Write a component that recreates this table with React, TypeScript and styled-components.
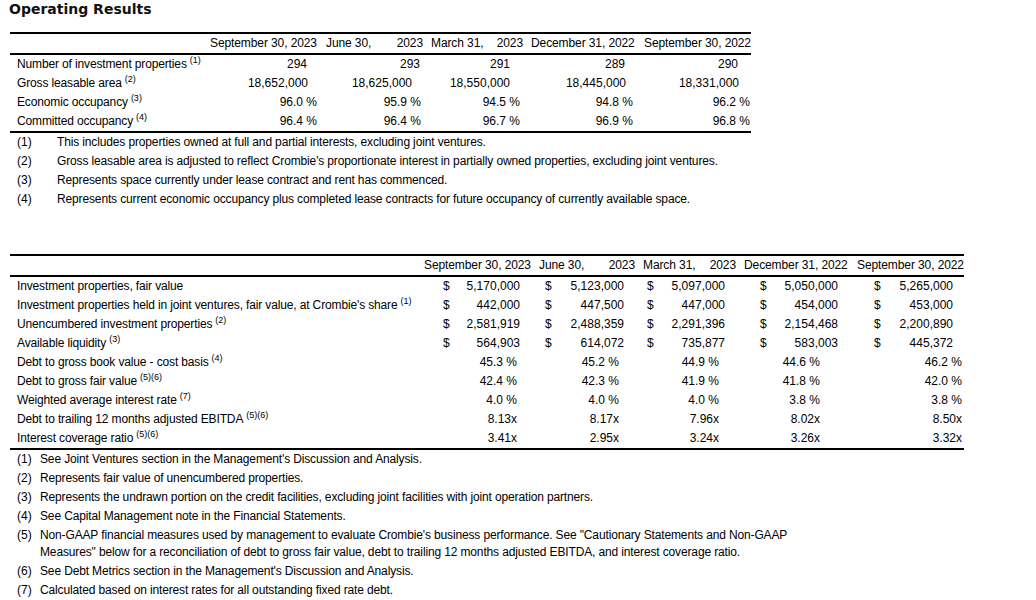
import React from "react";
import styled, { createGlobalStyle } from "styled-components";

const Global = createGlobalStyle`
  html, body { margin: 0; padding: 0; background: #fff; }
  body { font-family: "Liberation Sans", Arial, sans-serif; font-size: 12px; color: #000; }
`;

const Page = styled.div`
  padding: 1px 10px 0;
  display: flex;
  flex-direction: column;
  align-items: flex-start;
`;

const Title = styled.h1`
  margin: -1px 0 0 -1px;
  font-family: "DejaVu Sans", Verdana, sans-serif;
  font-weight: bold;
  font-size: 14px;
  line-height: 18px;
  color: #111;
`;

const Table = styled.div<{ $cols: string; $mt: number }>`
  margin-top: ${(p) => p.$mt}px;
  display: grid;
  grid-template-columns: ${(p) => p.$cols};
  border-top: 2px solid #000;
  border-bottom: 2px solid #000;
`;

const HeadRow = styled.div`
  display: contents;
`;

const HeadCell = styled.div`
  height: 19px;
  line-height: 19px;
  padding: 0 4px;
  display: flex;
  justify-content: space-between;
  white-space: nowrap;
  letter-spacing: -0.1px;
  border-bottom: 2px solid #000;
`;

const LabelCell = styled.div`
  height: 19px;
  line-height: 19px;
  padding-left: 7px;
  white-space: nowrap;
  letter-spacing: -0.14px;
`;

const Cell = styled.div<{ $pr: number; $pl?: number }>`
  height: 19px;
  line-height: 19px;
  padding-right: ${(p) => p.$pr}px;
  padding-left: ${(p) => p.$pl ?? 0}px;
  display: flex;
  justify-content: ${(p) => (p.$pl !== undefined ? "space-between" : "flex-end")};
  white-space: nowrap;
`;

const Sup = styled.sup`
  font-size: 9px;
  line-height: 0;
  vertical-align: 5px;
  margin-left: 3px;
  letter-spacing: 0;
`;

const Notes = styled.div<{ $numW: number; $width: number; $mt: number }>`
  margin-top: ${(p) => p.$mt}px;
  width: ${(p) => p.$width}px;
  display: grid;
  grid-template-columns: ${(p) => p.$numW}px 1fr;
  padding-left: 7px;
  box-sizing: border-box;
`;

const NoteNum = styled.div`
  padding: 1px 0;
  line-height: 17px;
`;

const NoteText = styled.div`
  padding: 1px 0;
  line-height: 17px;
  letter-spacing: -0.14px;
`;

type Head = [string, string?];

const heads: Head[] = [
  ["September 30, 2023"],
  ["June 30,", "2023"],
  ["March 31,", "2023"],
  ["December 31, 2022"],
  ["September 30, 2022"],
];

function Header() {
  return (
    <HeadRow>
      <HeadCell />
      {heads.map((h, i) => (
        <HeadCell key={i}>
          <span>{h[0]}</span>
          {h[1] && <span>{h[1]}</span>}
        </HeadCell>
      ))}
    </HeadRow>
  );
}

type Row1 = { label: string; sup?: string; vals: string[]; kind: "count" | "gla" | "pct" };

const t1Rows: Row1[] = [
  { label: "Number of investment properties", sup: "(1)", vals: ["294", "293", "291", "289", "290"], kind: "count" },
  { label: "Gross leasable area", sup: "(2)", vals: ["18,652,000", "18,625,000", "18,550,000", "18,445,000", "18,331,000"], kind: "gla" },
  { label: "Economic occupancy", sup: "(3)", vals: ["96.0 %", "95.9 %", "94.5 %", "94.8 %", "96.2 %"], kind: "pct" },
  { label: "Committed occupancy", sup: "(4)", vals: ["96.4 %", "96.4 %", "96.7 %", "96.9 %", "96.8 %"], kind: "pct" },
];

const t1Pads: Record<Row1["kind"], number[]> = {
  count: [15, 7, 17, 15, 13],
  gla: [14, 15, 17, 14, 12],
  pct: [5, 6, 7, 7, 1],
};

type Row2 = { label: string; sup?: string; vals: string[]; kind: "dollar" | "plain" | "pct" };

const t2Rows: Row2[] = [
  { label: "Investment properties, fair value", vals: ["5,170,000", "5,123,000", "5,097,000", "5,050,000", "5,265,000"], kind: "dollar" },
  { label: "Investment properties held in joint ventures, fair value, at Crombie's share", sup: "(1)", vals: ["442,000", "447,500", "447,000", "454,000", "453,000"], kind: "dollar" },
  { label: "Unencumbered investment properties", sup: "(2)", vals: ["2,581,919", "2,488,359", "2,291,396", "2,154,468", "2,200,890"], kind: "dollar" },
  { label: "Available liquidity", sup: "(3)", vals: ["564,903", "614,072", "735,877", "583,003", "445,372"], kind: "dollar" },
  { label: "Debt to gross book value - cost basis", sup: "(4)", vals: ["45.3 %", "45.2 %", "44.9 %", "44.6 %", "46.2 %"], kind: "pct" },
  { label: "Debt to gross fair value", sup: "(5)(6)", vals: ["42.4 %", "42.3 %", "41.9 %", "41.8 %", "42.0 %"], kind: "pct" },
  { label: "Weighted average interest rate", sup: "(7)", vals: ["4.0 %", "4.0 %", "4.0 %", "3.8 %", "3.8 %"], kind: "pct" },
  { label: "Debt to trailing 12 months adjusted EBITDA", sup: "(5)(6)", vals: ["8.13x", "8.17x", "7.96x", "8.02x", "8.50x"], kind: "pct" },
  { label: "Interest coverage ratio", sup: "(5)(6)", vals: ["3.41x", "2.95x", "3.24x", "3.26x", "3.32x"], kind: "pct" },
];

const t2DollarLeft = [23, 10, 8, 20, 21];
const t2DollarRight = [15, 15, 15, 15, 11];
const t2PctRight = [18, 20, 21, 33, 2];

const notes1 = [
  "This includes properties owned at full and partial interests, excluding joint ventures.",
  "Gross leasable area is adjusted to reflect Crombie's proportionate interest in partially owned properties, excluding joint ventures.",
  "Represents space currently under lease contract and rent has commenced.",
  "Represents current economic occupancy plus completed lease contracts for future occupancy of currently available space.",
];

const notes2 = [
  "See Joint Ventures section in the Management's Discussion and Analysis.",
  "Represents fair value of unencumbered properties.",
  "Represents the undrawn portion on the credit facilities, excluding joint facilities with joint operation partners.",
  "See Capital Management note in the Financial Statements.",
  "Non-GAAP financial measures used by management to evaluate Crombie's business performance. See \"Cautionary Statements and Non\u2011GAAP Measures\" below for a reconciliation of debt to gross fair value, debt to trailing 12 months adjusted EBITDA, and interest coverage ratio.",
  "See Debt Metrics section in the Management's Discussion and Analysis.",
  "Calculated based on interest rates for all outstanding fixed rate debt.",
];

function NoteList({ items, numW, width, mt }: { items: string[]; numW: number; width: number; mt: number }) {
  return (
    <Notes $numW={numW} $width={width} $mt={mt}>
      {items.map((t, i) => (
        <React.Fragment key={i}>
          <NoteNum>({i + 1})</NoteNum>
          <NoteText>{t}</NoteText>
        </React.Fragment>
      ))}
    </Notes>
  );
}

export default function App() {
  return (
    <>
      <Global />
      <Page>
        <Title>Operating Results</Title>
        <Table $cols="196px 116px 105px 100px 113px 111px" $mt={14}>
          <Header />
          {t1Rows.map((r, ri) => (
            <React.Fragment key={ri}>
              <LabelCell>
                {r.label}
                {r.sup && <Sup>{r.sup}</Sup>}
              </LabelCell>
              {r.vals.map((v, ci) => (
                <Cell key={ci} $pr={t1Pads[r.kind][ci]}>
                  {v}
                </Cell>
              ))}
            </React.Fragment>
          ))}
        </Table>
        <NoteList items={notes1} numW={40} width={760} mt={0} />
        <Table $cols="410px 115px 104px 101px 113px 111px" $mt={45}>
          <Header />
          {t2Rows.map((r, ri) => (
            <React.Fragment key={ri}>
              <LabelCell>
                {r.label}
                {r.sup && <Sup>{r.sup}</Sup>}
              </LabelCell>
              {r.vals.map((v, ci) =>
                r.kind === "dollar" ? (
                  <Cell key={ci} $pl={t2DollarLeft[ci]} $pr={t2DollarRight[ci]}>
                    <span>$</span>
                    <span>{v}</span>
                  </Cell>
                ) : (
                  <Cell key={ci} $pr={t2PctRight[ci]}>
                    {v}
                  </Cell>
                )
              )}
            </React.Fragment>
          ))}
        </Table>
        <NoteList items={notes2} numW={23} width={790} mt={0} />
      </Page>
    </>
  );
}
